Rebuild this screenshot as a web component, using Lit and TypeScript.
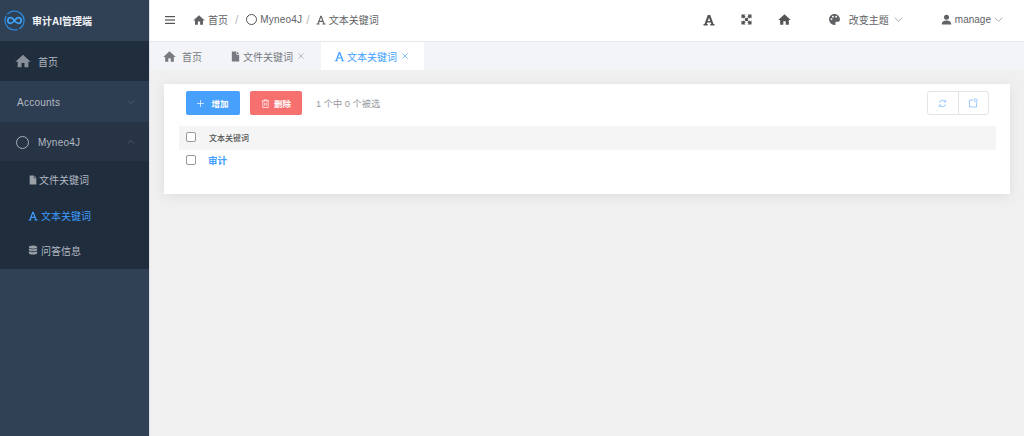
import { LitElement, html, css, svg } from "lit";
import { customElement } from "lit/decorators.js";

const home = svg`<path d="M12 2.500 0.500 13H4v8.500h5.800V15h4.400v6.500H20V13h3.500z"/>`;
const file = svg`<path d="M4 1h10v7h6v15H4zM15.500 1 20 6.500h-4.500z"/>`;
const letterA = svg`<path fill-rule="evenodd" d="M10.500 2h3L20.500 20.500H23V22.500H15.500V20.500H17.500L16 16.500H8L6.500 20.500H8.500V22.500H1V20.500H3.500zM12 6 8.900 14H15.100z"/>`;
const letterABold = svg`<path fill-rule="evenodd" d="M9.500 2h5L21 20H23V23H14.500V20H16.500L15.500 17H8.500L7.500 20H9.500V23H1V20H3zM12 7.500 9.600 14H14.400z"/>`;
const db = svg`<ellipse cx="12" cy="5" rx="10" ry="4"/><path d="M2 8c2 3.500 18 3.500 20 0v4c-2 4-18 4-20 0zM2 14.500c2 3.500 18 3.500 20 0V19c-1 5-19 5-20 0z"/>`;
const expand = svg`<path d="M1 1h9L7.500 3.500 10 6 6 10 3.500 7.500 1 10zM23 1v9l-2.500-2.500L18 10l-4-4 2.500-2.500L14 1zM1 23v-9l2.500 2.500L6 14l4 4-2.500 2.500L10 23zM23 23h-9l2.500-2.500L14 18l4-4 2.500 2.500L23 14z"/><rect x="8.500" y="8.500" width="7" height="7"/>`;
const palette = svg`<path fill-rule="evenodd" d="M12 2C6 2 2 6.500 2 12s4.500 10 10 10c2 0 2.500-1.500 1.800-2.800-.9-1.700.2-3.200 2-3.200H19c2 0 3-1.500 3-4 0-5.500-4.500-10-10-10zM6.500 13a1.700 1.700 0 1 1 0-3.400 1.700 1.700 0 0 1 0 3.400zM9 8.500a1.700 1.700 0 1 1 0-3.400 1.700 1.700 0 0 1 0 3.400zm6 0a1.700 1.700 0 1 1 0-3.400 1.700 1.700 0 0 1 0 3.400z"/>`;
const user = svg`<circle cx="12" cy="7" r="5.500"/><path d="M1.500 23c0-6.500 4-9 10.500-9s10.500 2.500 10.500 9z"/>`;
const chevron = svg`<path d="M2 7l10 10L22 7" fill="none" stroke="currentColor" stroke-width="1.800"/>`;
const chevronUp = svg`<path d="M2 17 12 7l10 10" fill="none" stroke="currentColor" stroke-width="1.800"/>`;
const cross = svg`<path d="M4 4l16 16M20 4 4 20" fill="none" stroke="currentColor" stroke-width="2"/>`;

const icon = (p: unknown, size: number) =>
  html`<svg class="ic" viewBox="0 0 24 24" width=${size} height=${size} fill="currentColor">${p}</svg>`;

@customElement("app-root")
export class AppRoot extends LitElement {
  static styles = css`
    :host { display: block; width: 1024px; height: 436px; overflow: hidden; font-family: "Liberation Sans", "Noto Sans CJK SC", sans-serif; font-size: 10px; color: #5f6266; }
    .ic { flex: none; display: block; }
    .app { display: flex; height: 436px; }
    .side { width: 150px; flex: none; background: #304156; color: #b4bac2; display: flex; flex-direction: column; border-right: 1px solid #dfe1e6; box-sizing: border-box; }
    .logo { height: 41px; display: flex; align-items: center; gap: 7px; padding-left: 4px; color: #f2f4f6; font-size: 10px; font-weight: 700; }
    .row { display: flex; align-items: center; font-size: 10px; }
    .r-home { height: 40px; background: #1f2d3d; padding-left: 15px; gap: 7px; }
    .r-acc { height: 41px; background: #2d3d52; padding: 1px 14px 0 17px; justify-content: space-between; letter-spacing: .25px; box-sizing: border-box; }
    .r-neo { height: 39px; background: #263445; padding: 1px 14px 0 16px; letter-spacing: .25px; box-sizing: border-box; }
    .r-neo .lbl { margin-left: 9px; flex: 1; }
    .sub { height: 36px; background: #1f2d3d; gap: 3px; padding: 1px 0 0 28px; box-sizing: border-box; }
    .sub.first { gap: 1px; }
    .sub.last { padding: 0 0 2px 28px; }
    .sub.on { color: #409eff; }
    .sub .ic { color: #9aa0a8; }
    .sub.on .ic { color: #409eff; }
    .r-home .ic { color: #8a9099; }
    .r-acc .ic, .r-neo .ic.chev { color: #647182; }
    .ring { width: 13px; height: 13px; border: 1.300px solid #aab0b8; border-radius: 50%; box-sizing: border-box; flex: none; }
    .ring.sm { width: 11px; height: 11px; border-color: #555; }
    .main { flex: 1; display: flex; flex-direction: column; background: #f0f0f0; min-width: 0; }
    .top { background: #fff; display: flex; align-items: center; border-bottom: 1px solid #e6e7ec; box-sizing: border-box; height: 42px; flex: none; padding-bottom: 2px; }
    .burger { margin-left: 15px; width: 10px; color: #555; }
    .crumbs { margin-left: 18px; display: flex; align-items: center; gap: 3px; color: #606266; }
    .sep { color: #b8bbc0; margin: 0 5px 0 4px; font-size: 12px; }
    .sep.n { margin: 0 3px 0 1px; }
    .trail { letter-spacing: .2px; }
    .spacer { flex: 1; }
    .tools { display: flex; align-items: center; color: #555; }
    .t1 { width: 38px; display: flex; justify-content: center; }
    .theme { display: flex; align-items: center; margin-left: 24px; color: #606266; }
    .theme .lb { margin: 0 5px 0 8px; }
    .mg { display: flex; align-items: center; gap: 3px; margin: 0 21px 0 38px; color: #606266; }
    .mg .ch { margin-left: 0; }
    .ch { color: #888; }
    .tabs { height: 28px; flex: none; background: #f3f4f8; display: flex; color: #777a80; }
    .tab { display: flex; align-items: center; gap: 3px; height: 28px; box-sizing: border-box; }
    .tab.a { width: 68px; padding-left: 13px; gap: 6px; }
    .tab.b { width: 103px; padding-left: 12px; gap: 2px; }
    .tab.c { width: 103px; background: #fff; color: #409eff; padding-left: 13px; gap: 2px; }
    .x { margin-left: 2px; color: #9a9da3; }
    .tab.c .x { color: #409eff; margin-left: 2px; }
    .content { padding: 14px 14px 0 14px; }
    .card { width: 846px; height: 110px; background: #fff; box-shadow: 0 2px 12px rgba(0,0,0,.08); box-sizing: border-box; padding: 7px 14px 0 15px; }
    .bar { display: flex; align-items: center; height: 24px; padding-left: 7px; }
    .btn { height: 24px; border-radius: 2px; color: #fff; display: flex; align-items: center; justify-content: center; font-size: 8.500px; font-weight: 600; box-sizing: border-box; }
    .add { width: 54px; background: #46a0fc; gap: 7px; }
    .del { width: 52px; background: #f77070; gap: 4px; margin-left: 10px; }
    .count { margin: -1px 0 0 14px; color: #96999e; font-size: 9.250px; }
    .grp { margin-left: auto; margin-right: 7px; display: flex; width: 62px; height: 24px; border: 1px solid #e3e3ea; border-radius: 3px; box-sizing: border-box; color: #8fc4fb; }
    .grp div { flex: 1; display: flex; align-items: center; justify-content: center; }
    .grp div + div { border-left: 1px solid #e3e3ea; }
    .thead { margin-top: 11px; height: 24px; background: #f5f5f5; display: flex; align-items: center; padding-left: 7px; font-size: 8px; color: #555; font-weight: 500; }
    .thead span { margin-top: -2px; }
    .trow { height: 23px; display: flex; align-items: center; padding-left: 7px; color: #409eff; font-size: 9.500px; font-weight: 600; }
    .trow span { margin-top: -3px; }
    .cb { width: 10px; height: 10px; border: 1px solid #999; border-radius: 2px; background: #fff; flex: none; margin-right: 12px; margin-top: -3px; box-sizing: border-box; }
    .thead .cb { margin-right: 13px; margin-top: -3px; }
  `;

  render() {
    return html`<div class="app">
      <aside class="side">
        <div class="logo">
          <svg class="ic" viewBox="0 0 22 22" width="21" height="21" fill="none">
            <path d="M11 1a10 10 0 0 1 10 10 10 10 0 0 1-10 10A10 10 0 0 1 1 11 10 10 0 0 1 11 1z" stroke="#2b8fe8" stroke-width="1.200" stroke-dasharray="26 2 24 2"/>
            <path d="M11 11c-1.500-2-2.500-3-4-3a3 3 0 0 0 0 6c1.500 0 2.500-1 4-3s2.500-3 4-3a3 3 0 0 1 0 6c-1.500 0-2.500-1-4-3z" stroke="#3ea0f5" stroke-width="1.800"/>
          </svg>
          <span>审计AI管理端</span>
        </div>
        <div class="row r-home">${icon(home, 16)}<span>首页</span></div>
        <div class="row r-acc"><span>Accounts</span>${icon(chevron, 8)}</div>
        <div class="row r-neo"><div class="ring"></div><span class="lbl">Myneo4J</span><svg class="ic chev" viewBox="0 0 24 24" width="8" height="8">${chevronUp}</svg></div>
        <div class="row sub first">${icon(file, 10)}<span>文件关键词</span></div>
        <div class="row sub on">${icon(letterA, 10)}<span>文本关键词</span></div>
        <div class="row sub last">${icon(db, 10)}<span>问答信息</span></div>
      </aside>
      <main class="main">
        <header class="top">
          <svg class="ic burger" viewBox="0 0 10 8" width="10" height="8" fill="currentColor"><rect width="10" height="1.200"/><rect y="3.400" width="10" height="1.200"/><rect y="6.800" width="10" height="1.200"/></svg>
          <div class="crumbs">
            ${icon(home, 12)}<span>首页</span><span class="sep">/</span>
            <div class="ring sm"></div><span class="trail">Myneo4J</span><span class="sep n">/</span>
            ${icon(letterA, 10)}<span>文本关键词</span>
          </div>
          <div class="spacer"></div>
          <div class="tools">
            <div class="t1">${icon(letterABold, 12)}</div>
            <div class="t1">${icon(expand, 11)}</div>
            <div class="t1">${icon(home, 13)}</div>
            <div class="theme">${icon(palette, 13)}<span class="lb">改变主题</span><span class="ch">${icon(chevron, 9)}</span></div>
            <div class="mg">${icon(user, 11)}<span>manage</span><span class="ch">${icon(chevron, 9)}</span></div>
          </div>
        </header>
        <nav class="tabs">
          <div class="tab a">${icon(home, 13)}<span>首页</span></div>
          <div class="tab b">${icon(file, 11)}<span>文件关键词</span><span class="x">${icon(cross, 8)}</span></div>
          <div class="tab c">${icon(letterA, 11)}<span>文本关键词</span><span class="x">${icon(cross, 8)}</span></div>
        </nav>
        <section class="content">
          <div class="card">
            <div class="bar">
              <div class="btn add"><svg class="ic" viewBox="0 0 8 8" width="7" height="7" stroke="#fff" stroke-width=".8"><path d="M4 0v8M0 4h8"/></svg><span>增加</span></div>
              <div class="btn del"><svg class="ic" viewBox="0 0 10 10" width="9" height="9" fill="none" stroke="#fff" stroke-width=".8"><path d="M1 2h8M3.500 2V1h3v1M2 2v7.500h6V2M4 4v3.500M6 4v3.500"/></svg><span>删除</span></div>
              <span class="count">1 个中 0 个被选</span>
              <div class="grp">
                <div><svg class="ic" viewBox="0 0 10 10" width="9" height="9" fill="none" stroke="currentColor" stroke-width="1"><path d="M1.500 4A3.600 3.600 0 0 1 8 3M8.500 6A3.600 3.600 0 0 1 2 7M8.500 1v2.200H6.300M1.500 9V6.800h2.200"/></svg></div>
                <div><svg class="ic" viewBox="0 0 10 10" width="10" height="10" fill="none" stroke="currentColor" stroke-width=".9"><path d="M5.500 2H1.500v7h7V4.500"/><circle cx="7.800" cy="2.300" r="1.500"/></svg></div>
              </div>
            </div>
            <div class="thead"><div class="cb"></div><span>文本关键词</span></div>
            <div class="trow"><div class="cb"></div><span>审计</span></div>
          </div>
        </section>
      </main>
    </div>`;
  }
}
